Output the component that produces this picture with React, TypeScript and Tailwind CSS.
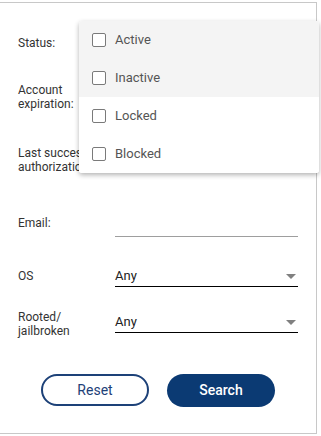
import React from "react";

const Caret: React.FC = () => (
  <svg width="10" height="5" viewBox="0 0 10 5" className="absolute right-[2px] top-[9px]">
    <path d="M0 0h10L5 5z" fill="#808080" />
  </svg>
);

const Row: React.FC<{ label: React.ReactNode; h: string; children?: React.ReactNode }> = ({ label, h, children }) => (
  <div className={`flex items-center ${h}`}>
    <div className="w-[115px] shrink-0 whitespace-nowrap overflow-hidden pl-[18px] leading-[14px] text-[12px] text-[#333]">
      {label}
    </div>
    <div className="w-[183px] shrink-0">{children}</div>
  </div>
);

const SelectField: React.FC = () => (
  <div className="relative h-[22px] border-b-[1.5px] border-black text-[13px] text-[#222] leading-[22px]">
    Any
    <Caret />
  </div>
);

const options = ["Active", "Inactive", "Locked", "Blocked"];

const App: React.FC = () => {
  return (
    <div className="w-[321px] h-[436px] bg-white overflow-hidden" style={{ fontFamily: "Roboto, 'Liberation Sans', sans-serif" }}>
      <div className="relative -ml-px mt-[2px] w-[318px] h-[432px] border border-[#c8c8c8]">
        <div className="pt-[18px]">
          <Row label="Status:" h="h-[44px]" />
          <Row label={<>Account<br />expiration:</>} h="h-[64px]" />
          <Row label={<>Last successful<br />authorization:</>} h="h-[62px]" />
          <Row label="Email:" h="h-[63px]">
            <div className="h-[19px] mt-[9px] border-b border-[#9e9e9e]" />
          </Row>
          <Row label="OS" h="h-[43px]">
            <SelectField />
          </Row>
          <Row label={<>Rooted/<br />jailbroken</>} h="h-[54px]">
            <div className="-mt-[4px]">
              <SelectField />
            </div>
          </Row>
        </div>

        <div className="flex justify-center gap-[18px] mt-[23px]">
          <button className="w-[108px] h-[32px] rounded-full border-2 border-[#1d4178] text-[14px] text-[#1d4178] bg-white">
            Reset
          </button>
          <button className="w-[108px] h-[33px] rounded-full bg-[#0b3a73] text-[14px] font-medium text-white">
            Search
          </button>
        </div>

        <div className="absolute left-[79px] top-[18px] w-[240px] bg-white rounded-[3px] shadow-[0_2px_5px_rgba(0,0,0,0.3)] overflow-hidden">
          {options.map((o, i) => (
            <div key={o} className={`flex items-center h-[38px] pl-[13px] ${i < 2 ? "bg-[#f4f4f4]" : "bg-white"}`}>
              <span className="w-[14px] h-[14px] border-[1.5px] border-[#7a7a7a] rounded-[2px] bg-white" />
              <span className="ml-[9px] text-[13px] text-[#555]">{o}</span>
            </div>
          ))}
        </div>
      </div>
    </div>
  );
};

export default App;
